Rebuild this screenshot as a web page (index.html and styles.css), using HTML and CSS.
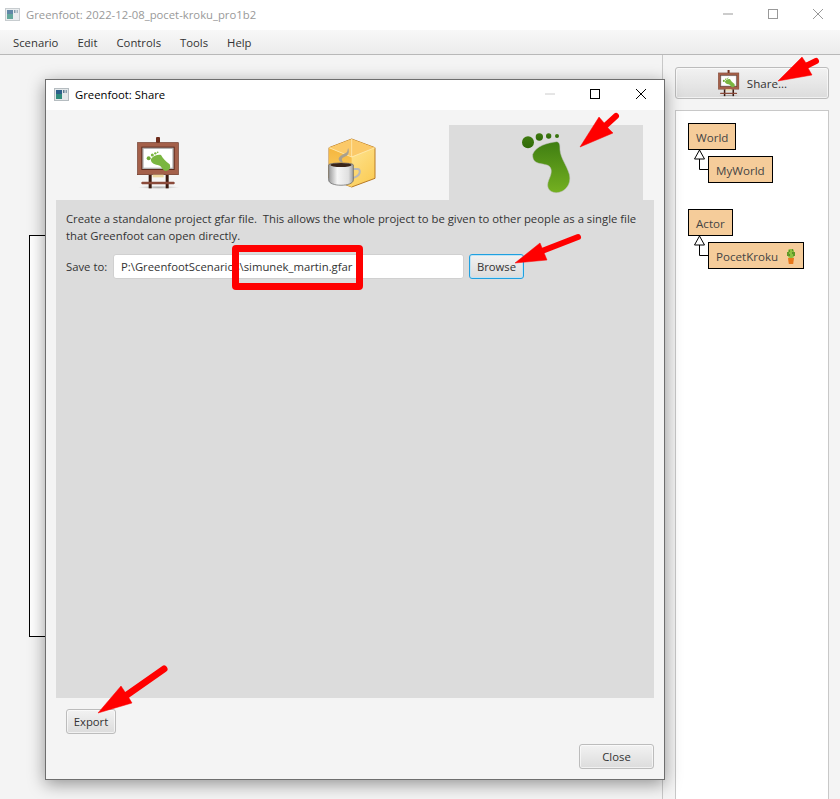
FILE: index.html
```html
<!DOCTYPE html>
<html lang="en">
<head>
<meta charset="utf-8">
<title>Greenfoot: Share</title>
<link rel="stylesheet" href="styles.css">
</head>
<body>
<div class="app">
  <header class="titlebar">
    <svg class="win-icon faded" viewBox="0 0 15 13"><rect x=".5" y=".5" width="14" height="12" fill="#e4e8ea" stroke="#b5bcc0"/><rect x="2" y="2" width="6" height="9" fill="#2f8a7c"/><rect x="2" y="2" width="6" height="4" fill="#2c5f8a"/><rect x="9" y="2" width="1.5" height="3" fill="#5a7a90"/><rect x="11.5" y="2" width="1.5" height="3" fill="#8aa0ae"/></svg>
    <span class="title-text">Greenfoot: 2022-12-08_pocet-kroku_pro1b2</span>
    <div class="win-controls muted">
      <svg viewBox="0 0 10 10"><path d="M0 5h10" stroke="#999" fill="none"/></svg>
      <svg viewBox="0 0 10 10"><rect x=".5" y=".5" width="9" height="9" stroke="#999" fill="none"/></svg>
      <svg viewBox="0 0 10 10"><path d="M0 0l10 10M10 0L0 10" stroke="#999" fill="none"/></svg>
    </div>
  </header>
  <nav class="menubar">
    <span>Scenario</span><span>Edit</span><span>Controls</span><span>Tools</span><span>Help</span>
  </nav>
  <main class="workspace">
    <section class="stage"><div class="world"></div></section>
    <aside class="sidebar">
      <button class="btn share-btn">
        <svg class="share-icon" viewBox="45 30 135 165"><use href="#easel"/></svg>
        <span>Share...</span>
      </button>
      <div class="classes">
        <div class="class-group">
          <div class="class-box">World</div>
          <div class="class-box child">
            <svg class="inherit" viewBox="0 0 20 27"><path d="M5.5 10v10.5H14" fill="none" stroke="#000" stroke-width="1"/><path d="M5.5 1L10.5 10H.5z" fill="#fff" stroke="#000"/></svg>
            MyWorld
          </div>
        </div>
        <div class="class-group">
          <div class="class-box">Actor</div>
          <div class="class-box child">
            <svg class="inherit" viewBox="0 0 20 27"><path d="M5.5 10v10.5H14" fill="none" stroke="#000" stroke-width="1"/><path d="M5.5 1L10.5 10H.5z" fill="#fff" stroke="#000"/></svg>
            PocetKroku
            <svg class="cactus" viewBox="0 0 10 16"><rect x="2" y="1" width="6" height="9" rx="2" fill="#8cc040"/><rect x="1" y="4" width="2" height="4" fill="#5f9a28"/><rect x="7" y="4" width="2" height="4" fill="#5f9a28"/><path d="M3 3h1M6 5h1M3 7h1M6 2h1" stroke="#2e5a14"/><path d="M2 10h6l-.8 6H2.800z" fill="#e8781c"/></svg>
          </div>
        </div>
      </div>
    </aside>
  </main>
</div>

<div class="dialog">
  <header class="dialog-title">
    <svg class="win-icon" viewBox="0 0 15 13"><rect x=".5" y=".5" width="14" height="12" fill="#e4e8ea" stroke="#b5bcc0"/><rect x="2" y="2" width="6" height="9" fill="#2f8a7c"/><rect x="2" y="2" width="6" height="4" fill="#2c5f8a"/><rect x="9" y="2" width="1.5" height="3" fill="#5a7a90"/><rect x="11.5" y="2" width="1.5" height="3" fill="#8aa0ae"/></svg>
    <span class="dialog-title-text">Greenfoot: Share</span>
    <div class="win-controls">
      <svg viewBox="0 0 10 10"><path d="M0 5h10" stroke="#ccc" fill="none"/></svg>
      <svg viewBox="0 0 10 10"><rect x=".5" y=".5" width="9" height="9" stroke="#000" fill="none"/></svg>
      <svg viewBox="0 0 10 10"><path d="M0 0l10 10M10 0L0 10" stroke="#000" fill="none"/></svg>
    </div>
  </header>
  <div class="dialog-body">
    <div class="tabs">
      <div class="tab">
        <svg viewBox="-7 0 240 225">
          <defs>
            <linearGradient id="toe" x1="0" y1="0" x2="0" y2="1"><stop offset="0" stop-color="#3f7a10"/><stop offset="1" stop-color="#2f6a08"/></linearGradient>
            <linearGradient id="sole" x1="0" y1="0" x2="0" y2="1"><stop offset="0" stop-color="#3f7e12"/><stop offset="1" stop-color="#74b020"/></linearGradient>
            <linearGradient id="cubeR" x1="0" y1="0" x2="1" y2="1"><stop offset="0" stop-color="#fff0b0"/><stop offset="1" stop-color="#fbc94e"/></linearGradient>
            <linearGradient id="cubeL" x1="0" y1="0" x2="0" y2="1"><stop offset="0" stop-color="#f5b63e"/><stop offset="1" stop-color="#fcd36c"/></linearGradient>
            <linearGradient id="cup" x1="0" y1="0" x2="1" y2="0"><stop offset="0" stop-color="#9a9a9a"/><stop offset=".35" stop-color="#f6f6f6"/><stop offset=".8" stop-color="#e0e0e0"/><stop offset="1" stop-color="#a0a0a0"/></linearGradient>
            <radialGradient id="shadow"><stop offset="0" stop-color="#000" stop-opacity=".3"/><stop offset="1" stop-color="#000" stop-opacity="0"/></radialGradient>
          </defs>
          <g id="easel">
            <ellipse cx="115" cy="187" rx="62" ry="5" fill="url(#shadow)"/>
            <rect x="107" y="36" width="12" height="18" rx="3" fill="#6e2d1c"/>
            <rect x="85" y="150" width="9" height="40" fill="#3a1a10"/>
            <rect x="136" y="150" width="9" height="40" fill="#3a1a10"/>
            <rect x="63" y="170" width="100" height="8" rx="3" fill="#8a4a3a"/>
            <rect x="52" y="53" width="122" height="96" fill="#a4604a" stroke="#6a3222" stroke-width="2"/>
            <rect x="63" y="65" width="100" height="70" fill="#5e2c1e"/>
            <rect x="66" y="68" width="94" height="64" fill="#b4b4b4"/>
            <rect x="70" y="72" width="86" height="56" fill="#fff"/>
            <circle cx="85" cy="100" r="6" fill="#6fa838"/><circle cx="96" cy="90" r="4.500" fill="#7ab640"/><circle cx="105" cy="85" r="3.500" fill="#7ab640"/><circle cx="112" cy="82" r="2.500" fill="#7ab640"/>
            <path d="M92 102C100 92 112 88 122 90C128 100 135 108 148 118C152 128 148 138 135 138C125 136 125 122 112 120C100 118 90 112 92 102Z" fill="#7ab640"/>
            <rect x="97" y="149" width="33" height="8" fill="#ecd79e"/>
          </g>
        </svg>
      </div>
      <div class="tab">
        <svg viewBox="-9 0 240 225">
          <path d="M110 42L180 68V160L110 186L42 160V68Z" fill="url(#cubeR)" stroke="#b87a24" stroke-width="3" stroke-linejoin="round"/>
          <path d="M110 42L180 68L110 96L42 68Z" fill="#fbc968"/>
          <path d="M42 68L110 96V186L42 160Z" fill="url(#cubeL)"/>
          <path d="M110 42V96M42 68L110 96L180 68" fill="none" stroke="#fff3c4" stroke-width="2"/>
          <path d="M78 112C62 100 76 92 92 84C100 80 96 74 100 70C104 84 100 92 88 96C78 100 80 106 84 112Z" fill="#a8a090"/>
          <path d="M115 132H128C138 132 136 150 124 155L112 160" fill="none" stroke="#b8b8b8" stroke-width="6"/>
          <path d="M41 120C41 112 115 112 115 120V165C115 186 41 186 41 165Z" fill="url(#cup)" stroke="#5a5a5a" stroke-width="2"/>
          <ellipse cx="78" cy="120" rx="32" ry="6" fill="#3a2418"/>
        </svg>
      </div>
      <div class="tab selected">
        <svg viewBox="-72 60 360 225">
          <circle cx="54" cy="112" r="18" fill="url(#toe)"/>
          <circle cx="88" cy="96" r="11" fill="url(#toe)"/>
          <circle cx="116" cy="93" r="8" fill="url(#toe)"/>
          <circle cx="141" cy="93" r="6" fill="url(#toe)"/>
          <path d="M68 148C78 122 112 114 140 110C150 112 150 122 150 135C152 160 170 180 178 208C186 240 162 264 138 263C116 262 108 246 116 226C124 208 128 194 118 184C104 172 66 184 68 148Z" fill="url(#sole)" stroke="#bcbcbc" stroke-width="1.500"/>
        </svg>
      </div>
    </div>
    <div class="panel">
      <p class="panel-text">Create a standalone project gfar file.&nbsp; This allows the whole project to be given to other people as a single file that Greenfoot can open directly.</p>
      <div class="save-row">
        <label class="save-label">Save to:</label>
        <div class="path-input">P:\GreenfootScenarios\simunek_martin.gfar</div>
        <button class="btn browse-btn">Browse</button>
      </div>
    </div>
    <div class="export-row"><button class="btn export-btn">Export</button></div>
    <div class="close-row"><button class="btn close-btn">Close</button></div>
  </div>
</div>

<div class="highlight"></div>
<svg class="arrows" viewBox="0 0 840 799">
  <g fill="#f00" stroke="#f00" stroke-linejoin="round">
    <path d="M778 81L802 57L806 63L817 60L808 68L812 75Z" stroke-width=".5"/>
    <path d="M806 66L816 61" stroke-width="6" stroke-linecap="round"/>
    <path d="M580 147L599 117L605 124L608 128L613 133Z" stroke-width=".5"/>
    <path d="M604 127L616 116" stroke-width="6" stroke-linecap="round"/>
    <path d="M515 263L540 243L547 260Z" stroke-width=".5"/>
    <path d="M542 251L578 237" stroke-width="6" stroke-linecap="round"/>
    <path d="M98 713L121 686L125 692L129 698L132 703Z" stroke-width=".5"/>
    <path d="M124 697L164 669" stroke-width="7" stroke-linecap="round"/>
  </g>
</svg>
</body>
</html>
```
FILE: styles.css
```css
* { box-sizing: border-box; }
html, body { margin: 0; height: 100%; }
body {
  width: 840px;
  height: 799px;
  overflow: hidden;
  position: relative;
  background: #f4f4f4;
  font: 11.3px "Open Sans", "Noto Sans", sans-serif;
  color: #333;
}
.app { display: flex; flex-direction: column; height: 799px; }

.titlebar {
  display: flex;
  align-items: center;
  height: 30px;
  padding: 0 0 2px 5px;
  background: #fff;
  flex: none;
}
.win-icon { width: 15px; height: 13px; flex: none; }
.faded { opacity: .75; }
.title-text { margin-left: 6px; color: #999; white-space: nowrap; }
.win-controls { margin-left: auto; display: flex; gap: 35px; padding-right: 17px; }
.win-controls svg { width: 10px; height: 10px; display: block; }

.menubar {
  display: flex;
  align-items: center;
  gap: 19px;
  height: 25px;
  padding: 0 0 0 13px;
  flex: none;
  background: linear-gradient(#f8f8f8, #ececec);
  border-bottom: 1px solid #b8b8b8;
  color: #333;
}

.workspace { display: flex; flex: 1; min-height: 0; }
.stage {
  width: 663px;
  flex: none;
  padding: 180px 0 0 29px;
  border-right: 1px solid #c8c8c8;
}
.world {
  width: 620px;
  height: 402px;
  background: #fff;
  border: 1px solid #000;
}
.sidebar {
  flex: 1;
  display: flex;
  flex-direction: column;
  gap: 11px;
  padding: 12px 11px 0 12px;
}

.btn {
  font: inherit;
  color: #333;
  height: 25px;
  padding: 0;
  border: 1px solid #bcbcbc;
  border-radius: 3px;
  background: linear-gradient(#f2f2f2, #dcdcdc);
  box-shadow: inset 0 0 0 1px rgba(255,255,255,.6);
}
.share-btn {
  display: flex;
  align-items: center;
  justify-content: center;
  gap: 7px;
  height: 32px;
  flex: none;
  font-size: 11.6px;
}
.share-icon { width: 23px; height: 28px; }

.classes {
  flex: 1;
  background: #fff;
  border: 1px solid #c8c8c8;
  border-bottom: 0;
  padding: 12px 12px;
  display: flex;
  flex-direction: column;
  gap: 26px;
}
.class-group { display: flex; flex-direction: column; align-items: flex-start; gap: 6px; }
.class-box {
  position: relative;
  display: flex;
  align-items: center;
  height: 27px;
  padding: 1px 7px 0;
  background: #f5cc9a;
  border: 1px solid #000;
  color: #444;
  font-size: 11.6px;
}
.child { margin-left: 20px; }
.inherit {
  position: absolute;
  left: -15px;
  top: -8px;
  width: 20px;
  height: 27px;
}
.cactus { width: 10px; height: 16px; margin-left: 8px; }

.dialog {
  position: absolute;
  left: 45px;
  top: 79px;
  width: 620px;
  height: 701px;
  display: flex;
  flex-direction: column;
  background: #f4f4f4;
  border: 1px solid #6e6e6e;
  box-shadow: 0 4px 16px rgba(0,0,0,.4);
}
.dialog-title {
  display: flex;
  align-items: center;
  flex: none;
  height: 30px;
  padding: 0 0 2px 8px;
  background: #fff;
}
.dialog-title-text { margin-left: 6px; color: #000; }
.dialog-title .win-controls { gap: 35px; padding-right: 18px; }
.dialog-title .win-controls svg:last-child { margin-left: 1px; }

.dialog-body { flex: 1; display: flex; flex-direction: column; padding: 15px 10px 10px; }
.tabs { display: flex; padding-left: 5px; flex: none; }
.tab { width: 194px; height: 75px; }
.tab svg { width: 100%; height: 75px; display: block; }
.tab.selected { background: #dcdcdc; }

.panel {
  height: 498px;
  flex: none;
  padding: 10px;
  background: #dcdcdc;
}
.panel-text { margin: 0; line-height: 17px; color: #333; }
.save-row { display: flex; align-items: center; margin-top: 10px; }
.save-label { width: 47px; flex: none; }
.path-input {
  width: 351px;
  height: 25px;
  padding: 0 7px;
  line-height: 24px;
  background: #fff;
  border: 1px solid #d0d0d0;
  border-radius: 3px;
  white-space: nowrap;
}
.browse-btn {
  width: 55px;
  margin-left: 5px;
  border-color: #1fa0e0;
  box-shadow: inset 0 0 0 1px #bfe3f5;
}
.export-row { margin: 11px 0 0 10px; }
.export-btn { width: 50px; }
.close-row { display: flex; justify-content: flex-end; margin-top: 10px; }
.close-btn { width: 75px; }

.highlight {
  position: absolute;
  left: 232px;
  top: 245px;
  width: 131px;
  height: 45px;
  border: 7px solid #f00;
  border-radius: 4px;
}
.arrows { position: absolute; left: 0; top: 0; width: 840px; height: 799px; pointer-events: none; }
```
